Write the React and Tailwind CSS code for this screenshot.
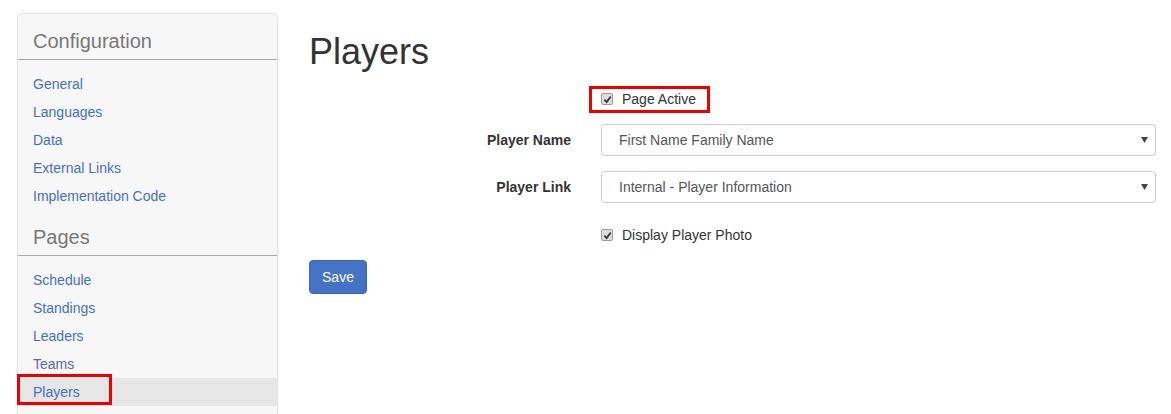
import React from "react";

const font = { fontFamily: '"Liberation Sans", Arial, Helvetica, sans-serif' };

function Check() {
  return (
    <span className="inline-flex w-[12px] h-[12px] shrink-0 items-center justify-center rounded-[2px] border border-[#9a9a9a] bg-[#dedede]">
      <svg width="9" height="9" viewBox="0 0 10 10">
        <path d="M1.5 5.2 L4 7.8 L8.6 1.8" fill="none" stroke="#3a3a3a" strokeWidth="2" />
      </svg>
    </span>
  );
}

function Section({ title, items, active }) {
  return (
    <div>
      <div className="pt-[13px] pb-[4px] px-[15px] text-[20px] leading-[28px] text-[#777] border-b border-[#a9a9a9]">
        {title}
      </div>
      <ul className="mt-[10px]">
        {items.map((it) => (
          <li
            key={it}
            className={
              "relative h-[28px] leading-[28px] px-[15px] text-[14px] " +
              (it === active ? "bg-[#e6e6e6]" : "")
            }
          >
            <a className={it === "Teams" ? "text-[#5d64b6]" : "text-[#4470c3]"}>{it}</a>
            {it === active && (
              <span className="absolute left-[-1px] top-[-4px] w-[95px] h-[31px] border-[3px] border-[#ee0000]" />
            )}
          </li>
        ))}
      </ul>
    </div>
  );
}

function Select({ value }) {
  return (
    <div className="relative h-[32px] rounded-[4px] border border-[#cccccc] bg-white flex items-center pl-[17px] text-[14px] text-[#555]">
      {value}
      <svg className="absolute right-[7px] top-[12px]" width="7" height="6" viewBox="0 0 7 6">
        <path d="M0 0 H7 L3.5 6 Z" fill="#444" />
      </svg>
    </div>
  );
}

export default function App() {
  return (
    <div className="bg-white min-h-[414px] flex gap-[31px] pl-[17px] pt-[13px] pr-[15px]" style={font}>
      <aside className="w-[261px] shrink-0 rounded-[4px] border border-[#e3e3e3] bg-[#f7f7f7] pb-[30px]">
        <Section
          title="Configuration"
          items={["General", "Languages", "Data", "External Links", "Implementation Code"]}
        />
        <Section
          title="Pages"
          items={["Schedule", "Standings", "Leaders", "Teams", "Players"]}
          active="Players"
        />
      </aside>
      <main className="flex-1 text-[14px] text-[#333]">
        <h1 className="mt-[19px] text-[36px] leading-[40px] text-[#333]">Players</h1>
        <div className="mt-[17px] grid grid-cols-[262px_1fr] gap-x-[30px]">
          <div />
          <div className="h-[20px] flex items-center">
            <span className="relative inline-flex items-center gap-[9px]">
              <Check />
              <span className="leading-[20px]">Page Active</span>
              <span className="absolute left-[-12px] top-[-3px] w-[121px] h-[27px] border-[3px] border-[#ee0000]" />
            </span>
          </div>
        </div>
        <div className="mt-[15px] grid grid-cols-[262px_1fr] gap-x-[30px] items-center">
          <label className="text-right font-bold">Player Name</label>
          <Select value="First Name Family Name" />
        </div>
        <div className="mt-[15px] grid grid-cols-[262px_1fr] gap-x-[30px] items-center">
          <label className="text-right font-bold">Player Link</label>
          <Select value="Internal - Player Information" />
        </div>
        <div className="mt-[22px] grid grid-cols-[262px_1fr] gap-x-[30px]">
          <div />
          <div className="h-[20px] flex items-center gap-[9px]">
            <Check />
            <span className="leading-[20px]">Display Player Photo</span>
          </div>
        </div>
        <button className="mt-[15px] w-[58px] h-[34px] rounded-[4px] border border-[#3c66b5] bg-[#4472c4] text-white text-[14px]">
          Save
        </button>
      </main>
    </div>
  );
}
